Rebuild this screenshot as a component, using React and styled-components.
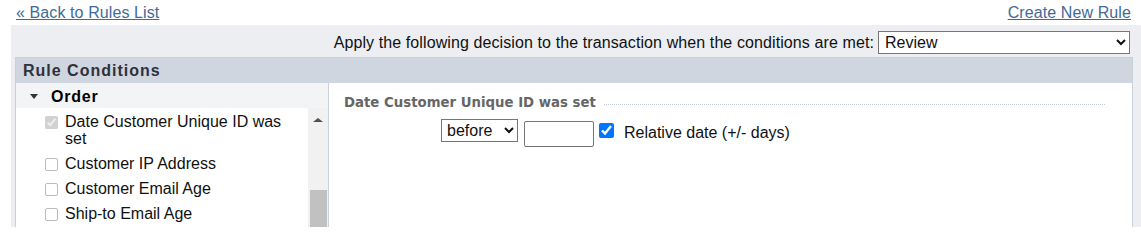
import React from "react";
import styled, { createGlobalStyle } from "styled-components";

const GlobalStyle = createGlobalStyle`
  html, body {
    margin: 0;
    padding: 0;
    background: #fff;
    overflow: hidden;
  }
  body {
    font-family: "Liberation Sans", Arial, sans-serif;
    font-size: 16px;
    color: #111;
  }
`;

const Page = styled.div`
  width: 1141px;
  height: 227px;
  overflow: hidden;
`;

const TopBar = styled.div`
  display: flex;
  justify-content: space-between;
  align-items: center;
  height: 25px;
  padding: 0 10px 0 16px;
  box-sizing: border-box;
`;

const NavLink = styled.a`
  color: #436a96;
  text-decoration: underline;
  font-size: 16px;
  line-height: 18px;
  letter-spacing: 0.1px;
  cursor: pointer;
`;

const Frame = styled.div`
  margin-left: 11px;
  background: #eceef1;
  padding: 6px 8px 0 4px;
  height: 220px;
`;

const DecisionRow = styled.div`
  display: flex;
  justify-content: flex-end;
  align-items: center;
  gap: 4px;
  padding-right: 3px;
  height: 23px;
  margin-bottom: 3px;
`;

const DecisionText = styled.span`
  letter-spacing: 0.1px;
`;

const DecisionSelect = styled.select`
  width: 252px;
  height: 23px;
  font-family: "Liberation Sans", Arial, sans-serif;
  font-size: 16px;
  border: 1px solid #767676;
  border-radius: 0;
  background: #fff;
  color: #111;
  padding: 0 2px;
`;

const Panel = styled.div`
  border: 1px solid #c9d1dc;
  background: #fff;
  height: 200px;
`;

const PanelHeader = styled.div`
  height: 25px;
  line-height: 25px;
  background: #cfd6df;
  padding-left: 7px;
  font-weight: bold;
  font-size: 16px;
  letter-spacing: 1px;
  color: #30303c;
`;

const Body = styled.div`
  display: flex;
  height: 175px;
`;

const Sidebar = styled.div`
  width: 312px;
  border-right: 1px solid #c9d1dc;
  display: flex;
  flex-direction: column;
`;

const GroupRow = styled.div`
  height: 25px;
  background: #f3f4f6;
  display: flex;
  align-items: center;
  padding-left: 14px;
  font-weight: bold;
  font-size: 16px;
  letter-spacing: 0.8px;
  color: #000;
`;

const Caret = styled.span`
  width: 0;
  height: 0;
  border-left: 4px solid transparent;
  border-right: 4px solid transparent;
  border-top: 5px solid #333;
  margin-right: 13px;
  margin-top: 1px;
`;

const GroupName = styled.span`
  margin-top: 2px;
`;

const ListArea = styled.div`
  flex: 1;
  display: flex;
`;

const Items = styled.div`
  flex: 1;
  padding-right: 10px;
  padding-top: 1px;
`;

const Item = styled.label`
  display: flex;
  align-items: flex-start;
  padding: 4px 0 4px 29px;
  line-height: 17px;
  font-size: 16px;
  color: #111;
`;

const ItemBox = styled.input`
  width: 13px;
  height: 13px;
  margin: 3px 7px 0 0;
  flex: none;

  &:not(:checked) {
    appearance: none;
    box-sizing: border-box;
    border: 1px solid #bcbcbc;
    border-radius: 2px;
    background: #fff;
  }
`;

const Scrollbar = styled.div`
  width: 20px;
  background: #f1f1f1;
  display: flex;
  flex-direction: column;
  align-items: center;
`;

const ScrollArrow = styled.span`
  width: 0;
  height: 0;
  border-left: 5px solid transparent;
  border-right: 5px solid transparent;
  border-bottom: 4px solid #505050;
  margin-top: 10px;
`;

const ScrollThumb = styled.div`
  width: 17px;
  height: 60px;
  background: #c1c1c1;
  margin-top: 68px;
`;

const Detail = styled.div`
  flex: 1;
  padding: 12px 27px 0 15px;
`;

const Legend = styled.div`
  display: flex;
  align-items: center;
  font-family: "DejaVu Sans", Verdana, sans-serif;
  font-size: 13.3px;
  font-weight: bold;
  color: #666;
  line-height: 15px;

  &::after {
    content: "";
    flex: 1;
    border-top: 1px dotted #c3cad8;
    margin: 3px 0 0 8px;
  }
`;

const Controls = styled.div`
  display: flex;
  align-items: flex-start;
  padding-left: 97px;
  margin-top: 9px;
`;

const SmallSelect = styled.select`
  width: 77px;
  height: 23px;
  font-family: "Liberation Sans", Arial, sans-serif;
  font-size: 16px;
  border: 1px solid #767676;
  border-radius: 0;
  background: #fff;
  color: #111;
  padding: 0 1px;
`;

const DaysInput = styled.input`
  width: 70px;
  height: 26px;
  box-sizing: border-box;
  margin: 2px 0 0 6px;
  border: 1px solid #767676;
  border-radius: 2px;
  font-family: "Liberation Sans", Arial, sans-serif;
  font-size: 16px;
`;

const RelCheck = styled.input`
  width: 15px;
  height: 15px;
  margin: 4px 10px 0 5px;
`;

const RelLabel = styled.span`
  font-size: 16px;
  line-height: 18px;
  margin-top: 5px;
  color: #111;
`;

const conditions = [
  { label: "Date Customer Unique ID was set", checked: true },
  { label: "Customer IP Address", checked: false },
  { label: "Customer Email Age", checked: false },
  { label: "Ship-to Email Age", checked: false },
];

export default function App() {
  return (
    <>
      <GlobalStyle />
      <Page>
        <TopBar>
          <NavLink>« Back to Rules List</NavLink>
          <NavLink>Create New Rule</NavLink>
        </TopBar>
        <Frame>
          <DecisionRow>
            <DecisionText>
              Apply the following decision to the transaction when the conditions are met:
            </DecisionText>
            <DecisionSelect defaultValue="Review">
              <option>Accept</option>
              <option>Review</option>
              <option>Reject</option>
            </DecisionSelect>
          </DecisionRow>
          <Panel>
            <PanelHeader>Rule Conditions</PanelHeader>
            <Body>
              <Sidebar>
                <GroupRow>
                  <Caret />
                  <GroupName>Order</GroupName>
                </GroupRow>
                <ListArea>
                  <Items>
                    {conditions.map((c) => (
                      <Item key={c.label}>
                        <ItemBox type="checkbox" disabled defaultChecked={c.checked} />
                        <span>{c.label}</span>
                      </Item>
                    ))}
                  </Items>
                  <Scrollbar>
                    <ScrollArrow />
                    <ScrollThumb />
                  </Scrollbar>
                </ListArea>
              </Sidebar>
              <Detail>
                <Legend>Date Customer Unique ID was set</Legend>
                <Controls>
                  <SmallSelect defaultValue="before">
                    <option>before</option>
                    <option>after</option>
                  </SmallSelect>
                  <DaysInput type="text" />
                  <RelCheck type="checkbox" defaultChecked />
                  <RelLabel>Relative date (+/- days)</RelLabel>
                </Controls>
              </Detail>
            </Body>
          </Panel>
        </Frame>
      </Page>
    </>
  );
}
